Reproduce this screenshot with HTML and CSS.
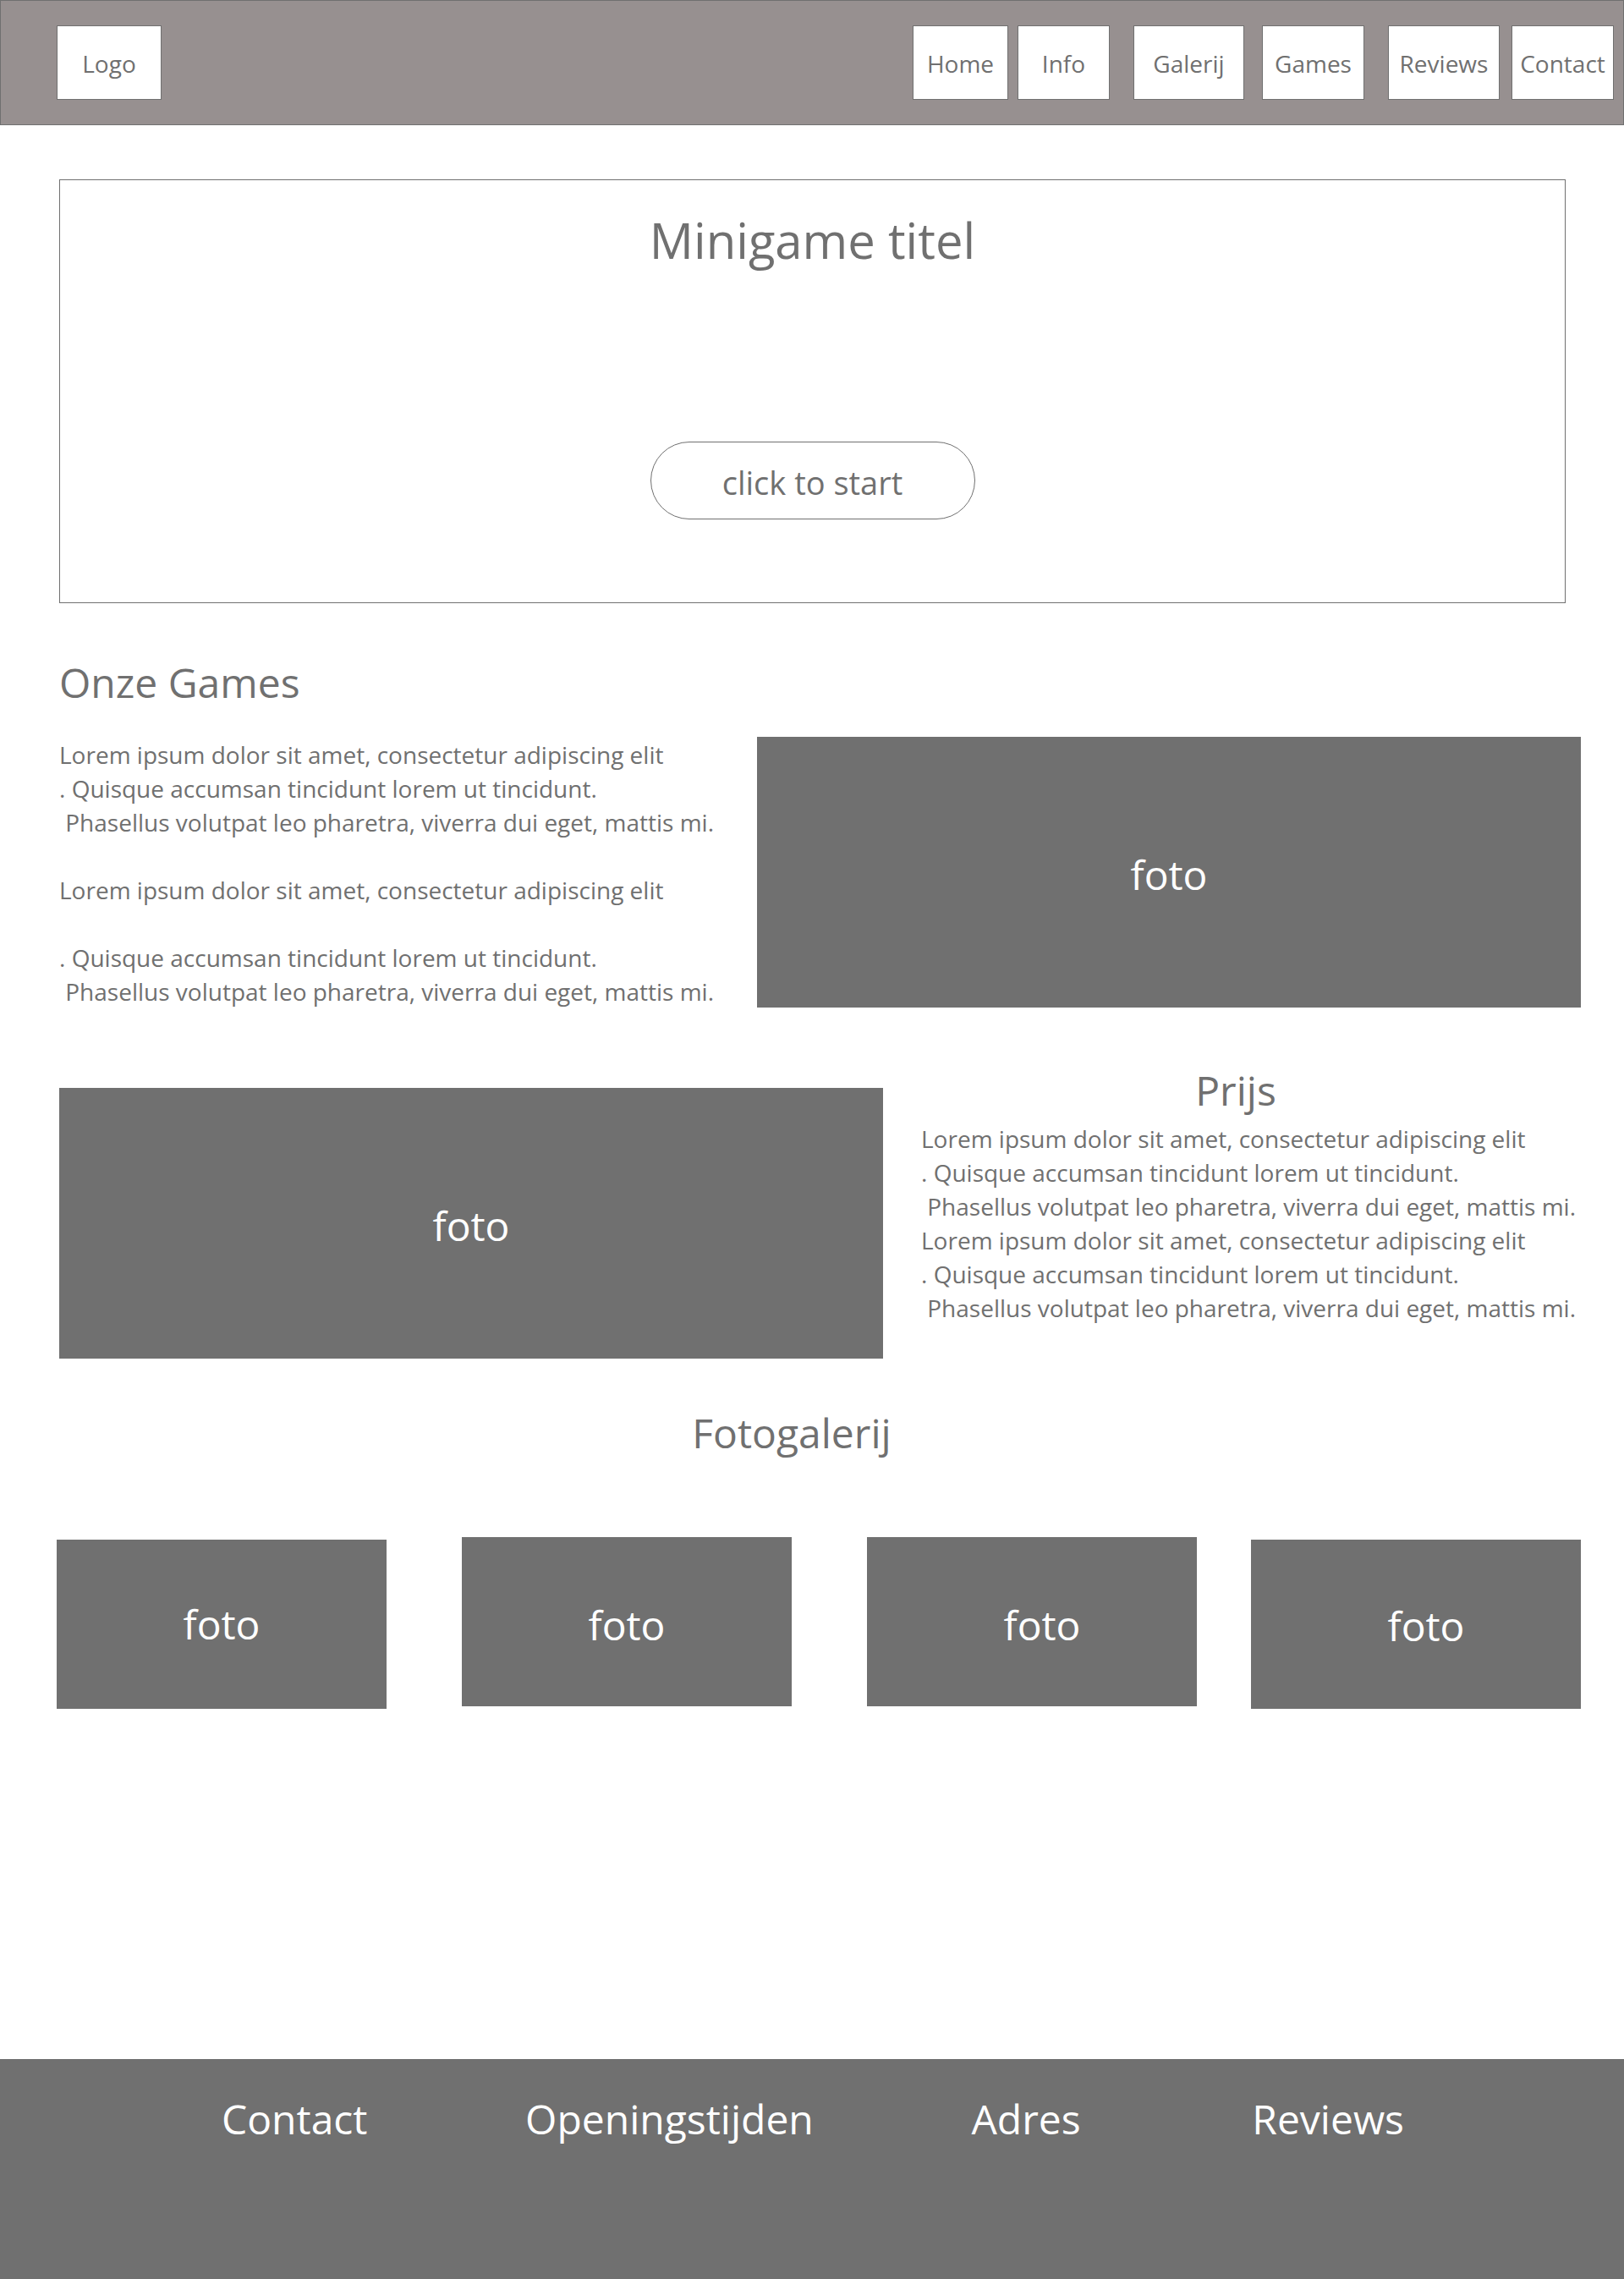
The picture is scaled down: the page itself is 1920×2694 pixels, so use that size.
FILE: index.html
```html
<!DOCTYPE html>
<html lang="nl">
<head>
<meta charset="utf-8">
<meta name="viewport" content="width=device-width, initial-scale=1">
<title>Minigame</title>
<link rel="stylesheet" href="styles.css">
</head>
<body>
<header class="site-header">
  <a class="tile logo" href="#">Logo</a>
  <nav class="nav">
    <a class="tile home" href="#">Home</a>
    <a class="tile info" href="#info">Info</a>
    <a class="tile galerij" href="#galerij">Galerij</a>
    <a class="tile games" href="#games">Games</a>
    <a class="tile reviews" href="#reviews">Reviews</a>
    <a class="tile contact" href="#contact">Contact</a>
  </nav>
</header>
<main>
  <section class="hero">
    <h1 class="hero-title">Minigame titel</h1>
    <button class="start" type="button">click to start</button>
  </section>

  <section class="games-section" id="games">
    <h2 class="heading">Onze Games</h2>
    <div class="split">
      <p class="copy">Lorem ipsum dolor sit amet, consectetur adipiscing elit<br>. Quisque accumsan tincidunt lorem ut tincidunt.<br>&nbsp;Phasellus volutpat leo pharetra, viverra dui eget, mattis mi.<br><br>Lorem ipsum dolor sit amet, consectetur adipiscing elit<br><br>. Quisque accumsan tincidunt lorem ut tincidunt.<br>&nbsp;Phasellus volutpat leo pharetra, viverra dui eget, mattis mi.</p>
      <div class="photo large">foto</div>
    </div>
  </section>

  <section class="split price-section" id="info">
    <div class="photo large">foto</div>
    <div class="price">
      <h2 class="heading">Prijs</h2>
      <p class="copy">Lorem ipsum dolor sit amet, consectetur adipiscing elit<br>. Quisque accumsan tincidunt lorem ut tincidunt.<br>&nbsp;Phasellus volutpat leo pharetra, viverra dui eget, mattis mi.<br>Lorem ipsum dolor sit amet, consectetur adipiscing elit<br>. Quisque accumsan tincidunt lorem ut tincidunt.<br>&nbsp;Phasellus volutpat leo pharetra, viverra dui eget, mattis mi.</p>
    </div>
  </section>

  <section class="gallery-section" id="galerij">
    <h2 class="heading">Fotogalerij</h2>
    <div class="gallery">
      <div class="photo small lowered">foto</div>
      <div class="photo small raised">foto</div>
      <div class="photo small raised shifted">foto</div>
      <div class="photo small lowered shifted last">foto</div>
    </div>
  </section>
</main>
<footer class="site-footer" id="contact">
  <a href="#contact">Contact</a>
  <a href="#contact">Openingstijden</a>
  <a href="#contact">Adres</a>
  <a class="footer-reviews" id="reviews" href="#reviews">Reviews</a>
</footer>
</body>
</html>
```
FILE: styles.css
```css
* {
  box-sizing: border-box;
}

body {
  margin: 0;
  background: #fff;
  color: #707070;
  font-family: "Segoe UI", "Open Sans", sans-serif;
  font-size: 28px;
  line-height: 40px;
}

h1, h2, p {
  margin: 0;
  font-weight: 400;
}

a {
  color: inherit;
  text-decoration: none;
}

/* Header */
.site-header {
  display: flex;
  justify-content: space-between;
  padding: 29px 11px 29px 66px;
  border: 1px solid #707070;
  background: #979090;
}

.tile {
  display: flex;
  justify-content: center;
  align-items: center;
  height: 88px;
  padding-top: 2px;
  border: 1px solid #707070;
  background: #fff;
}

.nav { display: flex; }
.logo { width: 124px; }
.home { width: 113px; margin-right: 11px; }
.info { width: 109px; margin-right: 28px; }
.galerij { width: 131px; margin-right: 21px; }
.games { width: 121px; margin-right: 28px; }
.reviews { width: 132px; margin-right: 14px; }
.contact { width: 121px; }

/* Minigame */
.hero {
  display: flex;
  flex-direction: column;
  align-items: center;
  margin: 64px 69px 0 70px;
  padding: 31px 0 98px;
  border: 1px solid #707070;
}

.hero-title {
  font-size: 58px;
  line-height: 80px;
}

.start {
  width: 384px;
  height: 92px;
  margin-top: 198px;
  padding: 4px 0 0;
  border: 1px solid #707070;
  border-radius: 46px;
  background: #fff;
  color: inherit;
  font-family: inherit;
  font-size: 38px;
  line-height: 52px;
}

/* Text beside a photo */
.heading {
  font-size: 48px;
  line-height: 66px;
}

.split {
  display: grid;
  grid-template-columns: minmax(0, 780fr) minmax(0, 974fr);
  gap: 45px;
}

.copy {
  padding-top: 1px;
  white-space: nowrap;
}

.photo {
  display: flex;
  justify-content: center;
  align-items: center;
  background: #707070;
  color: #fff;
  font-size: 48px;
  line-height: 66px;
}

.large {
  height: 320px;
  padding-top: 6px;
}

.games-section { padding: 61px 51px 0 70px; }
.games-section .split { margin-top: 31px; }

.price-section {
  grid-template-columns: minmax(0, 974fr) minmax(0, 780fr);
  margin-top: 94px;
  padding: 0 51px 0 70px;
}

.price {
  margin-top: -30px;
}

.price .heading {
  margin-bottom: 3px;
  padding-right: 36px;
  text-align: center;
}

/* Gallery */
.gallery-section { padding: 55px 51px 0 67px; }

.gallery-section .heading {
  padding-right: 64px;
  text-align: center;
}

.gallery {
  display: flex;
  gap: 89px;
  margin-top: 90px;
}

.small {
  flex: 1;
  height: 200px;
}

.lowered { margin-top: 3px; }
.raised { padding-top: 8px; }
.shifted { text-indent: 24px; }

.last {
  margin-left: -25px;
  padding-top: 4px;
}

/* Footer */
.site-footer {
  display: flex;
  justify-content: space-between;
  margin-top: 414px;
  padding: 38px 260px 156px 262px;
  background: #707070;
  color: #fff;
  font-size: 48px;
  line-height: 66px;
}

.footer-reviews { margin-left: 16px; }
```
